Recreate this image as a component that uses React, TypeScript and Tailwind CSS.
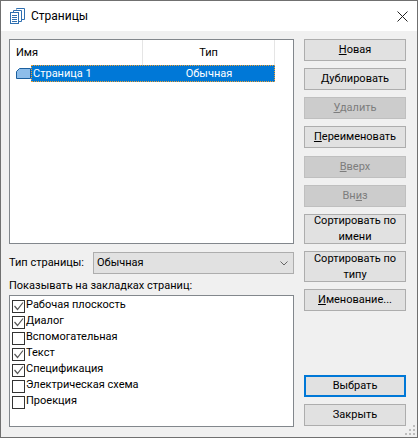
import { FC, ReactNode } from "react";

const font = "font-['Roboto','Noto_Sans',sans-serif] text-[11px] leading-[16px]";

const PagesIcon = () => (
  <svg width="15" height="16" viewBox="0 0 15 16" fill="none" className="shrink-0">
    <path d="M6.5 1.5V0.5H14.5V11.5H11.5" stroke="#2f6fb0" />
    <path d="M3.5 4.5V2.5H11.5V13.5H8.5" stroke="#2f6fb0" />
    <rect x="0.5" y="4.5" width="8" height="11" fill="#fff" stroke="#2f6fb0" />
    <path d="M2 7.5H7M2 9.5H7M2 11.5H7M2 13.5H7" stroke="#2f6fb0" />
  </svg>
);

const CloseIcon = () => (
  <svg width="11" height="11" viewBox="0 0 11 11" fill="none">
    <path d="M0.5 0.5L10.5 10.5M10.5 0.5L0.5 10.5" stroke="#222" />
  </svg>
);

const FolderIcon = () => (
  <svg width="15" height="11" viewBox="0 0 15 11" fill="none" className="shrink-0">
    <path d="M0.5 3.5L3.5 0.5H14.5V10.5H0.5V3.5Z" fill="#8dbdea" stroke="#1b5f9e" />
  </svg>
);

const Chevron = () => (
  <svg width="8" height="5" viewBox="0 0 8 5" fill="none">
    <path d="M0.5 0.5L4 4L7.5 0.5" stroke="#666" />
  </svg>
);

const Btn: FC<{ children: ReactNode; disabled?: boolean; primary?: boolean; className?: string }> = ({
  children,
  disabled,
  primary,
  className,
}) => (
  <div
    className={`flex items-center justify-center text-center w-[102px] ${
      disabled
        ? "bg-[#cccccc] border border-[#bfbfbf] text-[#7d7d7d]"
        : primary
        ? "bg-[#e1e1e1] border-2 border-[#0078d7] text-black"
        : "bg-[#e1e1e1] border border-[#adadad] text-black"
    } ${className ?? "h-[22px]"}`}
  >
    <span>{children}</span>
  </div>
);

const Check: FC<{ label: string; checked?: boolean }> = ({ label, checked }) => (
  <div className="flex h-[16px]">
    <div className="mt-[4px] w-[13px] h-[13px] border border-[#333] bg-white flex items-center justify-center shrink-0">
      {checked && (
        <svg width="11" height="11" viewBox="0 0 11 11" fill="none">
          <path d="M1.5 5L4.5 8.5L10 1.5" stroke="#555" strokeWidth="1.2" />
        </svg>
      )}
    </div>
    <span className="ml-px mt-px whitespace-nowrap">{label}</span>
  </div>
);

const App: FC = () => {
  return (
    <div className={`w-[418px] h-[438px] relative bg-[#f0f0f0] border border-[#707070] flex flex-col text-black ${font}`}>
      <div className="h-[30px] bg-white flex items-center pl-[9px] pr-[9px] shrink-0">
        <PagesIcon />
        <span className="ml-[6px] flex-1 text-[12px]">Страницы</span>
        <CloseIcon />
      </div>

      <div className="flex pl-[8px] pt-[8px] gap-[10px]">
        <div className="w-[285px] flex flex-col">
          <div className="h-[205px] bg-white border border-[#82878c]">
            <div className="flex h-[25px] items-center">
              <div className="w-[133px] h-full pl-[6px] flex items-center border-r border-[#e5e5e5]">Имя</div>
              <div className="w-[132px] h-full flex items-center justify-center border-r border-[#e5e5e5]">
                <span>Тип</span>
              </div>
            </div>
            <div className="flex items-center h-[17px] pl-[6px]">
              <FolderIcon />
              <div className="w-[244px] h-[17px] flex items-center bg-[#0078d7] text-white outline-1 -outline-offset-1 outline-dotted outline-[#f0a030]">
                <span className="w-[112px] pl-[2px]">Страница 1</span>
                <span className="w-[132px] text-center">Обычная</span>
              </div>
            </div>
          </div>

          <div className="flex items-center mt-[8px] h-[22px]">
            <span className="w-[84px] shrink-0 whitespace-nowrap">Тип страницы:</span>
            <div className="flex-1 h-[22px] bg-[#e1e1e1] border border-[#adadad] flex items-center justify-between pl-[3px] pr-[5px]">
              <span>Обычная</span>
              <Chevron />
            </div>
          </div>

          <div className="mt-[4px] h-[16px]">Показывать на закладках страниц:</div>

          <div className="mt-[1px] h-[132px] bg-white border border-[#82878c] pl-[2px]">
            <Check label="Рабочая плоскость" checked />
            <Check label="Диалог" checked />
            <Check label="Вспомогательная" />
            <Check label="Текст" checked />
            <Check label="Спецификация" checked />
            <Check label="Электрическая схема" />
            <Check label="Проекция" />
          </div>
        </div>

        <div className="w-[102px] flex flex-col gap-[7px]">
          <Btn><u>Н</u>овая</Btn>
          <Btn><u>Д</u>ублировать</Btn>
          <Btn disabled><u>У</u>далить</Btn>
          <Btn><u>П</u>ереименовать</Btn>
          <Btn disabled className="h-[22px] mt-px"><u>В</u>верх</Btn>
          <Btn disabled>Вн<u>и</u>з</Btn>
          <Btn className="h-[30px]">Сортировать по имени</Btn>
          <Btn className="h-[31px]">Сортировать по типу</Btn>
          <Btn className="h-[22px]"><u>И</u>менование...</Btn>
          <Btn primary className="h-[22px] mt-[57px]">Выбрать</Btn>
          <Btn>Закрыть</Btn>
        </div>
      </div>

      <svg width="11" height="11" viewBox="0 0 11 11" className="absolute right-[1px] bottom-[1px]" fill="#bdbdbd">
        <rect x="8" y="0" width="2" height="2" />
        <rect x="4" y="4" width="2" height="2" />
        <rect x="8" y="4" width="2" height="2" />
        <rect x="0" y="8" width="2" height="2" />
        <rect x="4" y="8" width="2" height="2" />
        <rect x="8" y="8" width="2" height="2" />
      </svg>
    </div>
  );
};

export default App;
